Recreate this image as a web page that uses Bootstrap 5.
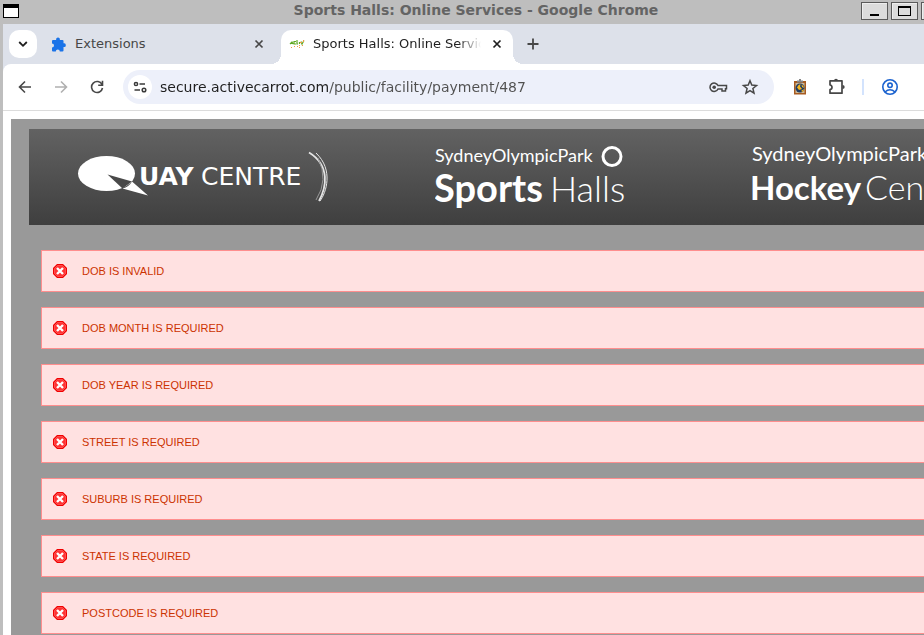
<!DOCTYPE html>
<html lang="en">
<head>
<meta charset="utf-8">
<meta name="viewport" content="width=device-width, initial-scale=1">
<title>Sports Halls: Online Services</title>
<link href="https://cdn.jsdelivr.net/npm/bootstrap@5.3.0/dist/css/bootstrap.min.css" rel="stylesheet">
<style>
body { font-family: "DejaVu Sans", sans-serif; font-size: 13px; background: #bebebe; height: 100vh; overflow: hidden; }
svg { display: block; flex: none; }
button { border: 0; padding: 0; background: none; color: #474747; display: flex; align-items: center; justify-content: center; flex: none; }
.titlebar { height: 24px; padding-left: 3px; }
.window-title { font-size: 14px; font-weight: bold; color: #646464; line-height: 20px; padding-left: 72px; }
.window-buttons { width: 63px; gap: 3px; padding-top: 2px; }
.window-buttons button { width: 27px; height: 18px; background: #dcdcdc; border: 1px solid #5a5a5a; box-shadow: inset 1px 1px #eee; }
.browser { margin-left: 3px; }
.tabstrip { height: 40px; background: #dde1ea; padding: 6px 0 0 6px; }
.tab-search { width: 28px; height: 28px; border-radius: 10px; background: #fff; color: #1f1f1f; }
.tab { height: 34px; padding-bottom: 6px; color: #474747; }
.tab-idle { width: 244px; padding-left: 14px; padding-right: 14px; gap: 9px; }
.tab-active { width: 232px; padding-left: 8px; padding-right: 8px; gap: 8px; background: #fff; color: #1f1f1f; border-radius: 10px 10px 0 0; position: relative; }
.tab-active button { color: #1f1f1f; }
.tab-active::before, .tab-active::after { content: ""; position: absolute; bottom: 0; width: 10px; height: 10px; }
.tab-active::before { right: 100%; background: radial-gradient(circle at 0 0, transparent 10px, #fff 10px); }
.tab-active::after { left: 100%; background: radial-gradient(circle at 100% 0, transparent 10px, #fff 10px); }
.tab-label { line-height: 28px; white-space: nowrap; overflow: hidden; flex: 1; }
.tab-active .tab-label { -webkit-mask-image: linear-gradient(to right, #000 145px, transparent 168px); mask-image: linear-gradient(to right, #000 145px, transparent 168px); }
.tab-close { width: 16px; height: 16px; }
.new-tab { width: 24px; height: 28px; }
.toolbar-wrap { background: #dde1ea; }
.toolbar { height: 47px; background: #fff; border-bottom: 1px solid #dcdcdc; border-top-left-radius: 8px; padding-left: 12px; }
.nav-buttons { gap: 16px; width: 108px; }
.nav-buttons button { width: 20px; height: 20px; }
.address { height: 34px; border-radius: 17px; background: #edf0fa; padding: 0 14px 0 5px; }
.site-info { width: 24px; height: 24px; border-radius: 50%; background: #fff; }
.address input { border: 0; outline: 0; padding: 0; margin-left: 8px; min-width: 0; font-size: 14px; line-height: 20px; color: transparent; background: linear-gradient(to right, #1f1f1f 168px, #505050 168px); -webkit-background-clip: text; background-clip: text; }
.address-actions { gap: 12px; }
.toolbar-actions { width: 150px; padding-left: 16px; gap: 16px; }
.toolbar-actions button { width: 20px; height: 20px; }
.divider { width: 2px; height: 16px; background: #d3e3fd; }
.viewport-pane { background: #fff; padding: 8px 0 0 8px; }
.site { background: #999; padding: 10px 0 0 18px; min-height: 520px; }
.banner { height: 96px; background: linear-gradient(#626262, #3f3f3f); overflow: hidden; }
.brand-logo text { font-family: Lato, sans-serif; fill: #fff; }
.brand-logo .quay { font-family: "DejaVu Sans", sans-serif; }
.logo-quay { margin-left: 48px; }
.logo-halls { margin-left: 104px; }
.logo-hockey { margin-left: 117px; }
.messages { padding: 25px 0 0 12px; gap: 15px; }
.error-message { min-height: 42px; padding: 0 11px; gap: 15px; margin: 0; border: 1px solid #ff8e8e; border-right: 0; border-radius: 0; background: #ffe1e1; color: #cc3300; font-family: "Liberation Sans", sans-serif; font-size: 11px; line-height: 16px; }
</style>
<script src="https://cdn.jsdelivr.net/npm/bootstrap@5.3.0/dist/js/bootstrap.bundle.min.js"></script>
</head>
<body>
<svg width="0" height="0" class="position-absolute" aria-hidden="true">
  <symbol id="error" viewBox="0 0 14 14"><path d="M4 0h6l4 4v6l-4 4H4l-4-4V4z" fill="#f00000"/><path d="M4.500 1.500h5l3 3v5l-3 3h-5l-3-3v-5z" fill="#f33" stroke="#ff7070" stroke-width=".6"/><path d="M4 4l6 6M10 4l-6 6" stroke="#fff" stroke-width="2.400"/></symbol>
  <symbol id="close" viewBox="0 0 10 10"><path d="M1.500 1.500l7 7M8.500 1.500l-7 7" stroke="currentColor" stroke-width="1.700"/></symbol>
</svg>

<header class="titlebar d-flex">
  <svg width="16" height="24" viewBox="0 0 16 24"><path d="M0 4h16v14H0z"/><path d="M1 8h14v9H1z" fill="#fff"/></svg>
  <div class="window-title flex-grow-1 text-center text-nowrap">Sports Halls: Online Services - Google Chrome</div>
  <div class="window-buttons d-flex overflow-hidden">
    <button type="button" aria-label="Minimize"><svg width="25" height="16"><path d="M8 11h9v2H8z"/></svg></button>
    <button type="button" aria-label="Maximize"><svg width="25" height="16"><path d="M6 3h13v10H6zM7 5v7h11V5z" fill-rule="evenodd"/></svg></button>
    <button type="button" aria-label="Close window"></button>
  </div>
</header>

<div class="browser">
  <div class="tabstrip d-flex">
    <button type="button" class="tab-search" aria-label="Search tabs"><svg width="10" height="8" viewBox="0 0 10 8"><path d="M1.200 2L5 5.800 8.800 2" fill="none" stroke="currentColor" stroke-width="1.800"/></svg></button>
    <div class="tab tab-idle d-flex align-items-center">
      <svg width="15" height="15" viewBox="0 0 15 15"><path d="M2 3h3.200a1.900 1.900 0 1 1 3.600 0H11.500q1 0 1 1V6.300a1.900 1.900 0 1 1 0 3.700v3.500q0 1-1 1H8.800a2 2 0 0 0-4 0H2q-1 0-1-1v-3a2 2 0 0 0 0-4V4q0-1 1-1z" fill="#1a73e8"/></svg>
      <span class="tab-label">Extensions</span>
      <button type="button" class="tab-close" aria-label="Close Extensions"><svg width="10" height="10"><use href="#close"/></svg></button>
    </div>
    <div class="tab tab-active d-flex align-items-center">
      <svg width="16" height="16" viewBox="0 0 16 16"><path d="M1 8l2-2 1 2M2 7.500h2M7 5.500H5v2.500h2M8 4v4h1M10.500 6v2M12 5.500l1 2.500 2-3.500" fill="none" stroke="#5fa822" stroke-width="1.200"/><path d="M2 11h1v1H2zM5 10h1v1H5zM8 10h1v1H8zM10 9h1v1h-1zM11 6h2v1h-2zM13 9h1v1h-1zM14 4h1v2h-1zM10 11h1v1h-1z" fill="#f39a45"/></svg>
      <span class="tab-label">Sports Halls: Online Services</span>
      <button type="button" class="tab-close" aria-label="Close Sports Halls"><svg width="10" height="10"><use href="#close"/></svg></button>
    </div>
    <button type="button" class="new-tab ms-2" aria-label="New tab"><svg width="12" height="12" viewBox="0 0 12 12"><path d="M6 .5v11M.5 6h11" stroke="currentColor" stroke-width="1.800"/></svg></button>
  </div>

  <div class="toolbar-wrap">
  <nav class="toolbar d-flex align-items-center" aria-label="Browser">
    <div class="nav-buttons d-flex">
      <button type="button" aria-label="Back"><svg width="14" height="14" viewBox="0 0 14 14"><path d="M13 7H2M7 1.500L1.500 7 7 12.500" fill="none" stroke="currentColor" stroke-width="1.600"/></svg></button>
      <button type="button" aria-label="Forward" disabled><svg width="14" height="14" viewBox="0 0 14 14"><path d="M1 7h11M7 1.500L12.500 7 7 12.500" fill="none" stroke="#b0b0b0" stroke-width="1.600"/></svg></button>
      <button type="button" aria-label="Reload"><svg width="14" height="14" viewBox="0 0 14 14"><path d="M12 4.500A5.500 5.500 0 1 0 12.500 8M12.500.8v4.400H8.200" fill="none" stroke="currentColor" stroke-width="1.600"/></svg></button>
    </div>
    <form class="address d-flex align-items-center flex-grow-1">
      <button type="button" class="site-info" aria-label="Site information"><svg width="14" height="12" viewBox="0 0 14 12"><g fill="none" stroke="#3a3a3a" stroke-width="1.500"><circle cx="3" cy="3" r="1.600"/><circle cx="11" cy="9" r="1.800"/><path d="M6.500 3H12M1.500 9H7"/></g></svg></button>
      <input type="text" class="flex-grow-1" aria-label="Address" value="secure.activecarrot.com/public/facility/payment/487">
      <div class="address-actions d-flex">
        <button type="button" aria-label="Passwords"><svg width="20" height="18" viewBox="0 0 20 18"><path d="M10 7.500a4.200 4.200 0 1 0 0 3.500h4v2h3.500v-2.200H18.500V7.500z" fill="none" stroke="currentColor" stroke-width="1.500"/><circle cx="6.200" cy="9.200" r="1.800" fill="currentColor"/></svg></button>
        <button type="button" aria-label="Bookmark"><svg width="20" height="18" viewBox="0 0 20 18"><path d="M10 2.800l1.800 4.300 4.700.4-3.600 3 1.100 4.600L10 12.600l-4 2.500 1.100-4.600-3.600-3 4.700-.4z" fill="none" stroke="currentColor" stroke-width="1.500"/></svg></button>
      </div>
    </form>
    <div class="toolbar-actions d-flex align-items-center">
      <button type="button" aria-label="Clipboard extension"><svg width="14" height="16" viewBox="0 0 14 16"><path d="M1 2h12v13.500H1z" fill="#a75b20"/><path d="M2.500 4h9v10h-9z" fill="#cdbb9b"/><circle cx="7" cy="9" r="4.500" fill="#203d63"/><path d="M4 8.500Q5 5.500 7.500 5L7 7.500 9 10l-3 1zM8.500 5.500q2.500 1 2.500 3.500l-2-1zM8 12l3-2-1 3z" fill="#f5b51b"/><path d="M4 1.500h2V0h2v1.500h2v2H4z" fill="#858585"/></svg></button>
      <button type="button" aria-label="Extensions"><svg width="20" height="20" viewBox="0 0 20 20"><path d="M4 3.800h12v12.400H4v-3.500q2-.4 2-2.400T4 8z" fill="none" stroke="currentColor" stroke-width="1.700" stroke-linejoin="round"/><path d="M8 4a2 2.300 0 0 1 4 0zM16.500 8a2.200 2 0 0 1 0 4z" fill="currentColor"/></svg></button>
      <span class="divider"></span>
      <button type="button" aria-label="Profile"><svg width="16" height="16" viewBox="0 0 16 16"><g fill="none" stroke="#1b62cf" stroke-width="1.600"><circle cx="8" cy="8" r="7.200"/><circle cx="8" cy="6.300" r="2.200"/><path d="M3 13q5-4.500 10 0"/></g></svg></button>
    </div>
  </nav>
  </div>

  <main class="viewport-pane">
    <div class="site">
      <div class="banner d-flex">
        <svg class="brand-logo logo-quay" width="254" height="96" viewBox="77 129 254 96" role="img" aria-label="Quay Centre">
          <ellipse cx="106.500" cy="173.500" rx="28.500" ry="17.500" fill="#fff"/>
          <path d="M107.500 174.500L132 181.500 122.500 188.500z" fill="#494949"/><path d="M122.500 188.500Q129 187 132 181.500L148 195.500z" fill="#fff"/>
          <text class="quay" x="139" y="185" font-size="25" font-weight="bold">UAY</text>
          <text class="quay" x="201" y="185" font-size="25">CENTRE</text>
          <g fill="none" stroke="#e4e4e4"><path d="M309 152.500C331 166 326 188 319 201" stroke-width="1.800"/><path d="M316 153C334 170 326 193 320 201" stroke-width="1"/><path d="M318 158Q329 180 316 200" stroke="#999" stroke-width="1"/></g>
        </svg>
        <svg class="brand-logo logo-halls" width="200" height="96" viewBox="435 129 200 96" role="img" aria-label="Sydney Olympic Park Sports Halls">
          <text x="435" y="162" font-size="18">SydneyOlympicPark</text>
          <circle cx="612" cy="156.500" r="9" fill="none" stroke="#fff" stroke-width="3"/>
          <text x="434" y="202" font-size="38" font-weight="bold">Sports</text>
          <text x="550" y="202" font-size="36" font-weight="300">Halls</text>
        </svg>
        <svg class="brand-logo logo-hockey" width="260" height="96" viewBox="752 129 260 96" role="img" aria-label="Sydney Olympic Park Hockey Centre">
          <text x="752" y="161" font-size="20">SydneyOlympicPark</text>
          <text x="750" y="200" font-size="33" font-weight="bold">Hockey</text>
          <text x="865" y="200" font-size="34" font-weight="300">Centre</text>
        </svg>
      </div>
      <div class="messages d-flex flex-column">
        <div class="alert error-message d-flex align-items-center" role="alert"><svg width="14" height="14"><use href="#error"/></svg><span>DOB IS INVALID</span></div>
        <div class="alert error-message d-flex align-items-center" role="alert"><svg width="14" height="14"><use href="#error"/></svg><span>DOB MONTH IS REQUIRED</span></div>
        <div class="alert error-message d-flex align-items-center" role="alert"><svg width="14" height="14"><use href="#error"/></svg><span>DOB YEAR IS REQUIRED</span></div>
        <div class="alert error-message d-flex align-items-center" role="alert"><svg width="14" height="14"><use href="#error"/></svg><span>STREET IS REQUIRED</span></div>
        <div class="alert error-message d-flex align-items-center" role="alert"><svg width="14" height="14"><use href="#error"/></svg><span>SUBURB IS REQUIRED</span></div>
        <div class="alert error-message d-flex align-items-center" role="alert"><svg width="14" height="14"><use href="#error"/></svg><span>STATE IS REQUIRED</span></div>
        <div class="alert error-message d-flex align-items-center" role="alert"><svg width="14" height="14"><use href="#error"/></svg><span>POSTCODE IS REQUIRED</span></div>
      </div>
    </div>
  </main>
</div>
</body>
</html>
